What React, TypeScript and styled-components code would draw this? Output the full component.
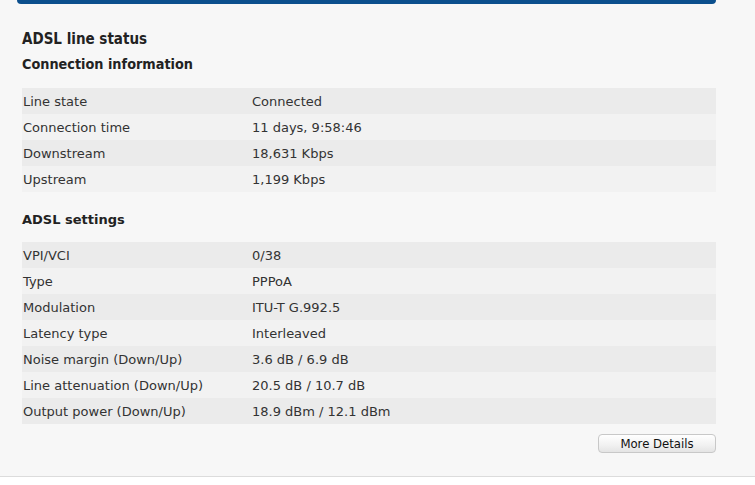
import React from 'react';
import styled, { createGlobalStyle } from 'styled-components';

const GlobalStyle = createGlobalStyle`
  html, body {
    margin: 0;
    padding: 0;
    background: #ffffff;
  }
  body {
    font-family: "DejaVu Sans", Verdana, sans-serif;
    color: #333;
  }
`;

const Page = styled.div`
  width: 755px;
  height: 477px;
  background: #f7f7f7;
  border-bottom: 1px solid #dcdcdc;
  box-sizing: border-box;
  padding: 0 39px 0 22px;
  display: flex;
  flex-direction: column;
`;

const TopBar = styled.div`
  height: 4px;
  margin: 0 0 0 -5px;
  background: #0b4f8d;
  border-radius: 0 0 5px 5px;
`;

const Title = styled.h1`
  margin: 25px 0 0;
  font-family: "DejaVu Sans Condensed", Tahoma, sans-serif;
  font-weight: bold;
  font-size: 15px;
  line-height: 20px;
  color: #222;
`;

const SubTitle = styled.h2<{ $condensed?: boolean; $top: number }>`
  margin: ${(p) => p.$top}px 0 0;
  font-family: ${(p) => (p.$condensed ? '"DejaVu Sans Condensed", Tahoma' : '"DejaVu Sans", Verdana')}, sans-serif;
  font-weight: bold;
  font-size: ${(p) => (p.$condensed ? 14.3 : 13)}px;
  line-height: 18px;
  color: #222;
`;

const Table = styled.div<{ $top: number }>`
  margin-top: ${(p) => p.$top}px;
  display: flex;
  flex-direction: column;
`;

const Row = styled.div<{ $shade: boolean }>`
  display: grid;
  grid-template-columns: 229px 1fr;
  height: 26px;
  align-items: center;
  padding-left: 1px;
  background: ${(p) => (p.$shade ? '#ebebeb' : '#f2f2f2')};
  font-size: 13px;
  color: #333;
`;

const Footer = styled.div`
  display: flex;
  justify-content: flex-end;
  margin-top: 10px;
`;

const Button = styled.button`
  width: 118px;
  height: 19px;
  padding: 0;
  border: 1px solid #c8c8c8;
  border-radius: 4px;
  background: linear-gradient(#ffffff, #f1f1f1 60%, #e4e4e4);
  font-family: "DejaVu Sans Condensed", Tahoma, sans-serif;
  font-size: 13px;
  color: #111;
`;

type Item = [string, string];

const connection: Item[] = [
  ['Line state', 'Connected'],
  ['Connection time', '11 days, 9:58:46'],
  ['Downstream', '18,631 Kbps'],
  ['Upstream', '1,199 Kbps'],
];

const settings: Item[] = [
  ['VPI/VCI', '0/38'],
  ['Type', 'PPPoA'],
  ['Modulation', 'ITU-T G.992.5'],
  ['Latency type', 'Interleaved'],
  ['Noise margin (Down/Up)', '3.6 dB / 6.9 dB'],
  ['Line attenuation (Down/Up)', '20.5 dB / 10.7 dB'],
  ['Output power (Down/Up)', '18.9 dBm / 12.1 dBm'],
];

function InfoTable({ items, top }: { items: Item[]; top: number }) {
  return (
    <Table $top={top}>
      {items.map(([label, value], i) => (
        <Row key={label} $shade={i % 2 === 0}>
          <span>{label}</span>
          <span>{value}</span>
        </Row>
      ))}
    </Table>
  );
}

export default function App() {
  return (
    <>
      <GlobalStyle />
      <Page>
        <TopBar />
        <Title>ADSL line status</Title>
        <SubTitle $condensed $top={6}>Connection information</SubTitle>
        <InfoTable items={connection} top={15} />
        <SubTitle $top={19}>ADSL settings</SubTitle>
        <InfoTable items={settings} top={13} />
        <Footer>
          <Button>More Details</Button>
        </Footer>
      </Page>
    </>
  );
}
